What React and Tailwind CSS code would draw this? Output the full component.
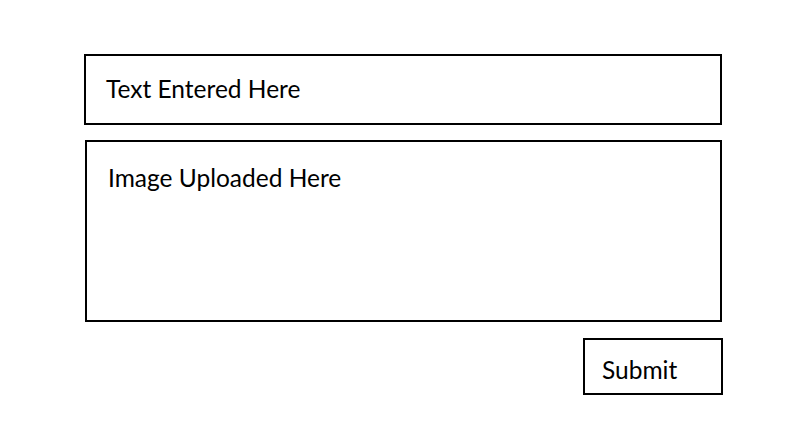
import React from 'react';

const App = () => {
  return (
    <div className="w-[800px] h-[429px] bg-white font-['Lato','Liberation_Sans',sans-serif] text-black">
      <div className="pt-[54px] pl-[84px] w-[723px] flex flex-col">
        {/* Text field */}
        <div className="h-[71px] w-[638px] border-2 border-black flex items-center pl-[20px] text-[24.5px]">
          Text Entered Here
        </div>

        {/* Image area */}
        <div className="mt-[15px] ml-px h-[182px] w-[637px] border-2 border-black pl-[21px] pt-[21px] text-[24.5px] leading-[30px]">
          Image Uploaded Here
        </div>

        {/* Submit */}
        <div className="mt-[16px] flex justify-end">
          <button className="h-[57px] w-[140px] border-2 border-black flex items-center pl-[17px] pt-[7px] text-[24.5px]">
            Submit
          </button>
        </div>
      </div>
    </div>
  );
};

export default App;
